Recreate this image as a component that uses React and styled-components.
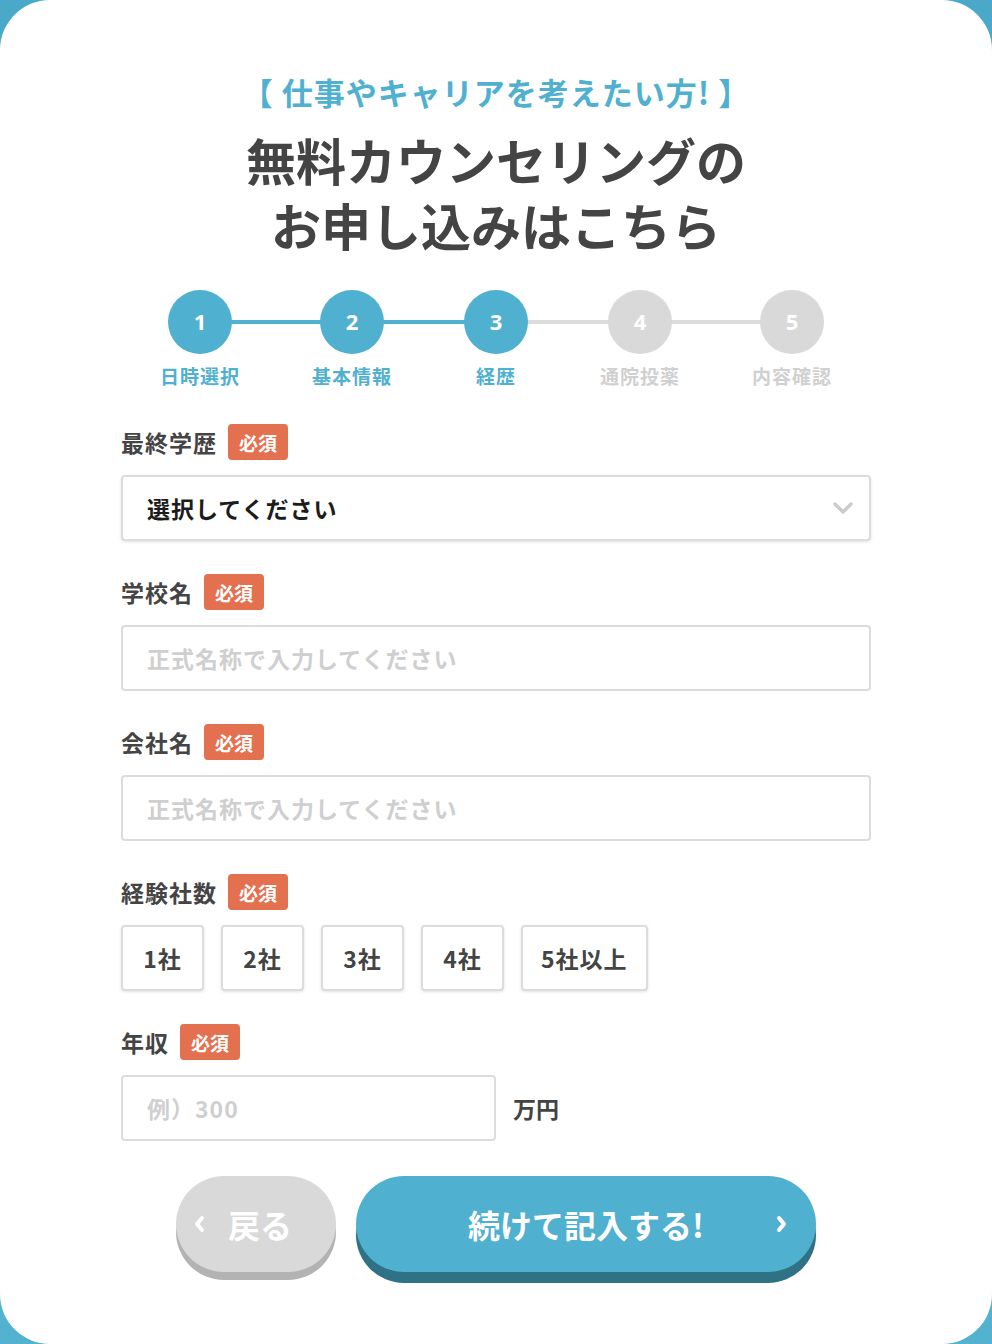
import React from "react";
import styled, { createGlobalStyle } from "styled-components";

const TEAL = "#4fb0cf";
const TEXT = "#444";

const steps = [
  { no: 1, label: "日時選択", done: true },
  { no: 2, label: "基本情報", done: true },
  { no: 3, label: "経歴", done: true },
  { no: 4, label: "通院投薬", done: false },
  { no: 5, label: "内容確認", done: false },
];

const companies = ["1社", "2社", "3社", "4社", "5社以上"];

const GlobalStyle = createGlobalStyle`
  body {
    margin: 0;
    background: linear-gradient(180deg, #4aa9c9 0%, #52b2d0 100%);
    font-family: "Noto Sans CJK JP", "Noto Sans", sans-serif;
  }
  * { box-sizing: border-box; }
`;

const Chevron = ({ dir = "down", color = "#ccc", weight = 3.5 }) => {
  const paths = {
    down: "M2 3 L10 11 L18 3",
    left: "M9 3 L4 9 L9 15",
    right: "M3 3 L8 9 L3 15",
  };
  const down = dir === "down";
  return (
    <svg width={down ? 20 : 12} height={down ? 14 : 18} viewBox={down ? "0 0 20 14" : "0 0 12 18"}>
      <path d={paths[dir]} fill="none" stroke={color} strokeWidth={weight} strokeLinecap="round" strokeLinejoin="round" />
    </svg>
  );
};

export default function App() {
  return (
    <>
      <GlobalStyle />
      <Panel>
        <Lead>【&nbsp;仕事やキャリアを考えたい方!&nbsp;】</Lead>
        <Title>
          無料カウンセリングの
          <br />
          お申し込みはこちら
        </Title>

        <Steps>
          {steps.map((s) => (
            <Step key={s.no}>
              <Circle $done={s.done}>{s.no}</Circle>
              <StepLabel $done={s.done}>{s.label}</StepLabel>
            </Step>
          ))}
        </Steps>

        <Form>
          <Field>
            <LabelRow>
              <Label>最終学歴</Label>
              <Badge>必須</Badge>
            </LabelRow>
            <Select>
              <span>選択してください</span>
              <Chevron dir="down" />
            </Select>
          </Field>

          <Field>
            <LabelRow>
              <Label>学校名</Label>
              <Badge>必須</Badge>
            </LabelRow>
            <Input placeholder="正式名称で入力してください" />
          </Field>

          <Field>
            <LabelRow>
              <Label>会社名</Label>
              <Badge>必須</Badge>
            </LabelRow>
            <Input placeholder="正式名称で入力してください" />
          </Field>

          <Field>
            <LabelRow>
              <Label>経験社数</Label>
              <Badge>必須</Badge>
            </LabelRow>
            <Choices>
              {companies.map((c) => (
                <Choice key={c}>{c}</Choice>
              ))}
            </Choices>
          </Field>

          <Field>
            <LabelRow>
              <Label>年収</Label>
              <Badge>必須</Badge>
            </LabelRow>
            <IncomeRow>
              <Input $width="375px" placeholder="例）300" />
              <Unit>万円</Unit>
            </IncomeRow>
          </Field>
        </Form>

        <Actions>
          <BackButton>
            <Arrow $side="left">
              <Chevron dir="left" color="#fff" weight={4} />
            </Arrow>
            戻る
          </BackButton>
          <NextButton>
            続けて記入する!
            <Arrow $side="right">
              <Chevron dir="right" color="#fff" weight={4} />
            </Arrow>
          </NextButton>
        </Actions>
      </Panel>
    </>
  );
}

const Panel = styled.div`
  width: 992px;
  height: 1344px;
  background: #fff;
  border-radius: 50px;
  padding-top: 72px;
  display: flex;
  flex-direction: column;
  align-items: center;
  overflow: hidden;
`;

const Lead = styled.div`
  color: ${TEAL};
  font-size: 31px;
  font-weight: 700;
  line-height: 39px;
  letter-spacing: 1px;
`;

const Title = styled.h1`
  margin: 16px 0 0;
  color: ${TEXT};
  font-size: 50px;
  font-weight: 700;
  line-height: 65px;
  text-align: center;
`;

const Steps = styled.div`
  position: relative;
  width: 672px;
  margin-top: 33px;
  display: flex;
  justify-content: space-between;

  &::before {
    content: "";
    position: absolute;
    top: 30px;
    left: 39px;
    right: 39px;
    height: 4px;
    background: linear-gradient(90deg, ${TEAL} 50%, #dcdcdc 50%);
  }
`;

const Step = styled.div`
  position: relative;
  display: flex;
  flex-direction: column;
  align-items: center;
  gap: 10px;
`;

const Circle = styled.div`
  width: 64px;
  height: 64px;
  border-radius: 50%;
  padding-bottom: 2px;
  background: ${(p) => (p.$done ? TEAL : "#d9d9d9")};
  color: #fff;
  font-family: "Open Sans", "Noto Sans", sans-serif;
  font-size: 22px;
  font-weight: 700;
  display: flex;
  align-items: center;
  justify-content: center;
`;

const StepLabel = styled.div`
  color: ${(p) => (p.$done ? TEAL : "#d0d0d0")};
  font-size: 19px;
  font-weight: 700;
  line-height: 24px;
  letter-spacing: 1px;
  white-space: nowrap;
`;

const Form = styled.div`
  width: 750px;
  margin-top: 36px;
  display: flex;
  flex-direction: column;
  gap: 33px;
`;

const Field = styled.div`
  display: flex;
  flex-direction: column;
  gap: 15px;
`;

const LabelRow = styled.div`
  display: flex;
  align-items: center;
  gap: 11px;
  height: 36px;
`;

const Label = styled.span`
  color: ${TEXT};
  font-size: 23px;
  font-weight: 700;
  letter-spacing: 1px;
`;

const Badge = styled.span`
  background: #e3704f;
  color: #fff;
  font-size: 19px;
  font-weight: 700;
  height: 36px;
  padding: 0 11px;
  border-radius: 4px;
  display: flex;
  align-items: center;
`;

const Select = styled.div`
  height: 66px;
  border: 2px solid #dcdcdc;
  border-radius: 4px;
  box-shadow: 0 1px 3px rgba(0, 0, 0, 0.12);
  padding: 0 16px 0 24px;
  display: flex;
  align-items: center;
  justify-content: space-between;
  color: #1c1c1c;
  font-size: 23px;
  font-weight: 700;
  letter-spacing: 1px;
`;

const Input = styled.input`
  width: ${(p) => p.$width || "100%"};
  height: 66px;
  border: 2px solid #dcdcdc;
  border-radius: 4px;
  padding: 0 24px;
  font-family: inherit;
  font-size: 23px;
  font-weight: 700;
  letter-spacing: 1px;
  color: #333;
  outline: none;

  &::placeholder {
    color: #cfcfcf;
  }
`;

const Choices = styled.div`
  display: flex;
  gap: 17px;
`;

const Choice = styled.button`
  min-width: 83px;
  height: 66px;
  padding: 0 18px;
  background: #fff;
  border: 2px solid #dcdcdc;
  border-radius: 4px;
  box-shadow: 0 1px 3px rgba(0, 0, 0, 0.12);
  color: ${TEXT};
  font-family: inherit;
  font-size: 23px;
  font-weight: 700;
  letter-spacing: 1px;
`;

const IncomeRow = styled.div`
  display: flex;
  align-items: center;
  gap: 17px;
`;

const Unit = styled.span`
  color: ${TEXT};
  font-size: 23px;
  font-weight: 700;
`;

const Actions = styled.div`
  margin-top: 35px;
  display: flex;
  gap: 20px;
`;

const PillButton = styled.button`
  position: relative;
  height: 96px;
  border: none;
  border-radius: 48px;
  color: #fff;
  font-family: inherit;
  font-size: 32px;
  font-weight: 700;
  display: flex;
  align-items: center;
  justify-content: center;
`;

const BackButton = styled(PillButton)`
  width: 160px;
  padding-left: 14px;
  background: #d9d9d9;
  box-shadow: 0 8px 0 #b3b3b3;
`;

const NextButton = styled(PillButton)`
  width: 460px;
  background: ${TEAL};
  box-shadow: 0 11px 0 #2f7286;
`;

const Arrow = styled.span`
  position: absolute;
  top: 50%;
  transform: translateY(-50%);
  display: flex;
  ${(p) => (p.$side === "left" ? "left: 17px;" : "right: 28px;")}
`;
